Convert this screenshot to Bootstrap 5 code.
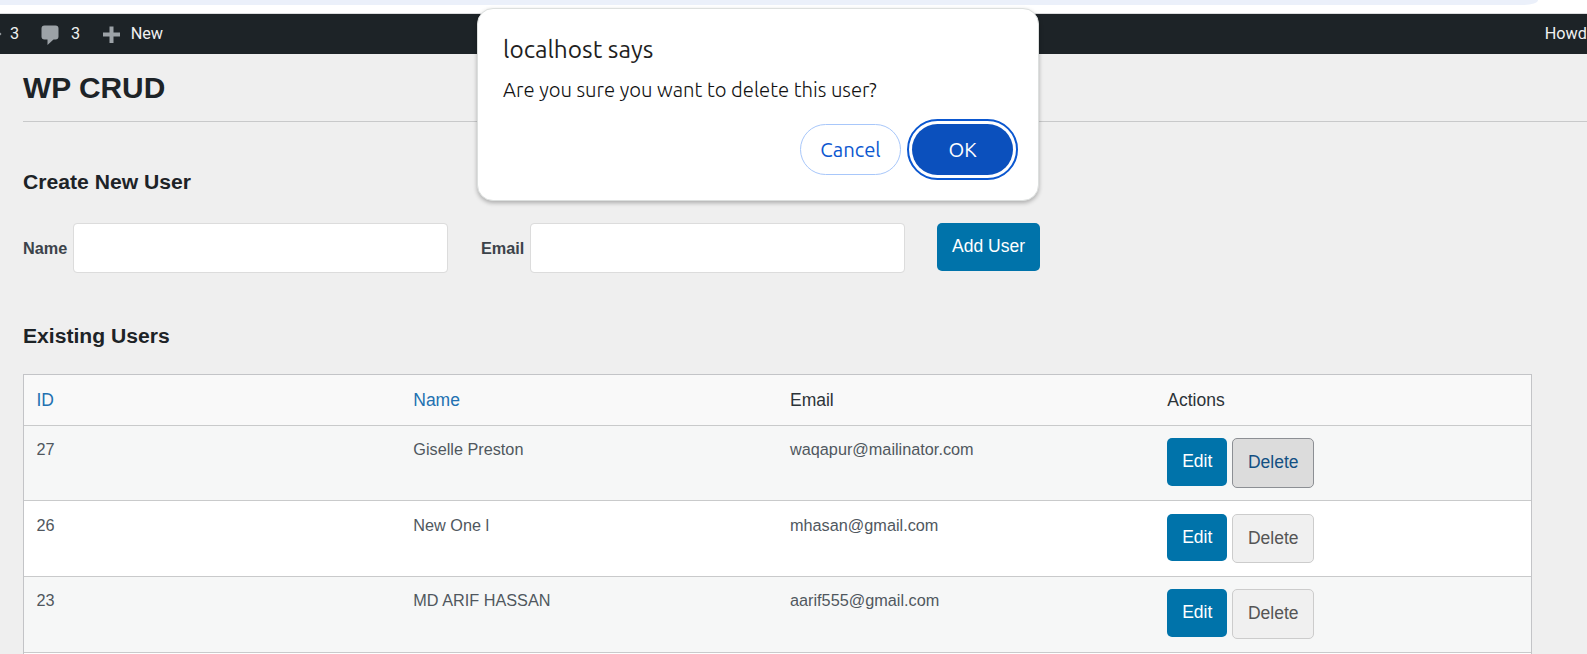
<!DOCTYPE html>
<html lang="en">
<head>
<meta charset="utf-8">
<title>WP CRUD</title>
<link href="https://cdn.jsdelivr.net/npm/bootstrap@5.3.0/dist/css/bootstrap.min.css" rel="stylesheet">
<style>
  body { background: #efefef; font-family: "Liberation Sans", Arial, sans-serif; font-size: 16.25px; color: #3c434a; height: 654px; overflow: hidden; }
  .browser-strip { height: 14px; background: #fff; border-bottom: 1px solid #dcdcde; }
  .omnibox { width: 1538px; height: 5px; background: #ebf0fa; border-radius: 0 0 14px 0 / 0 0 5px 0; }
  .admin-bar { height: 40px; background: #1d2327; color: #f0f0f1; font-family: Roboto, sans-serif; font-size: 16.25px; line-height: 40px; overflow: hidden; white-space: nowrap; }
  .admin-bar svg { display: block; fill: #9ca2a7; }
  .update-icon { width: 10px; overflow: hidden; }
  .update-count { width: 31px; }
  .comment-count { width: 43px; padding-left: 11px; }
  .wrap-page { padding-left: 23px; height: 600px; overflow: hidden; }
  h1 { font-size: 29.9px; line-height: 36px; font-weight: 700; color: #1d2327; padding: 16px 0 15px; border-bottom: 1px solid #c8c9ca; margin: 0; }
  h2 { font-size: 21.13px; line-height: 26px; font-weight: 700; color: #1d2327; margin: 0; }
  .create-title { margin-top: 47px; }
  .user-form { margin-top: 28px; height: 50px; }
  .user-form label { font-weight: 700; line-height: 50px; }
  .name-label { width: 50px; } .email-label { width: 49px; margin-left: 33px; }
  .user-form .form-control { width: 375px; height: 50px; border: 1px solid #dcdcdc; border-radius: 4px; }
  .btn-wp { background: #0073aa; color: #fff; font-size: 17.5px; line-height: 20px; padding: 13px 0 15px; border: 0; border-radius: 5px; height: 48px; }
  .btn-add { width: 103px; margin-left: 32px; }
  .list-title { margin-top: 50px; }
  .user-table { width: 1509px; margin: 25px 0 0; table-layout: fixed; border-collapse: separate; border-spacing: 0; border: 1px solid #c3c4c7; border-bottom: 0; }
  .user-table th, .user-table td { border-bottom: 1px solid #c9cacb; padding: 0 12.5px; vertical-align: top; }
  .user-table th:last-child, .user-table td:last-child { padding-left: 13px; }
  .user-table th { height: 51px; font-weight: 400; font-size: 17.5px; line-height: 50px; color: #2c3338; background: #f9f9f9; }
  .user-table th a { color: #2271b1; text-decoration: none; }
  .user-table td { height: 76px; padding-top: 13px; line-height: 22px; color: #50575e; background: #fff; }
  .user-table tr.row-first td { height: 75px; padding-top: 12px; }
  .user-table tr.odd td { background: #f6f7f7; }
  .user-table tr.odd.row-last td { padding-top: 12px; }
  .btn-edit { width: 60px; }
  .btn-del { width: 82px; height: 50px; margin-left: 5px; background: #f0f0f0; border: 1px solid #ccc; border-radius: 5px; color: #555; font-size: 17.5px; line-height: 20px; padding: 13px 0 15px; }
  .row-mid .btn-edit { height: 47px; }
  .row-mid .btn-del { height: 49px; padding-bottom: 14px; }
  .btn-del.pressed { background: #dcdcdc; border-color: #8c8f94; color: #135083; }
  .confirm-box { top: 8px; left: 477px; width: 562px; height: 193px; background: #fff; border: 1px solid #dcdfde; border-radius: 16px; box-shadow: 0 2px 4px rgba(0,0,0,.28); font-family: Ubuntu, "Noto Sans", sans-serif; color: #1f1f1f; padding: 24px 25px 0 25px; }
  .confirm-title { font-size: 24.4px; line-height: 32px; }
  .confirm-text { font-size: 20.28px; line-height: 28px; margin-top: 11px; font-weight: 300; color: #111; white-space: nowrap; }
  .confirm-actions { margin-top: 20px; gap: 11px; }
  .btn-pill { width: 101px; height: 51px; border-radius: 26px; font-size: 20.3px; padding: 0; line-height: 49px; font-weight: 400; }
  .btn-cancel { border: 1px solid #a8c7fa; color: #0b57d0; background: #fff; }
  .btn-ok { background: #0b50bd; color: #fff; border: 0; outline: 2px solid #0b57d0; outline-offset: 3px; }
</style>
</head>
<body>
<div class="browser-strip"><div class="omnibox"></div></div>
<nav class="admin-bar d-flex" aria-label="Admin bar">
  <div class="d-flex">
    <span class="update-icon"><svg width="10" height="40" viewBox="0 0 10 40"><path d="M0 18.500l1.500 1.500-1.500 1.500z"/></svg></span>
    <span class="update-count">3</span>
    <svg width="19" height="40" viewBox="0 0 19 40"><path d="M3.500 11.500h11a3 3 0 0 1 3 3v8a3 3 0 0 1-3 3H12.500L6.500 31v-5.500H3.500a3 3 0 0 1-3-3v-8a3 3 0 0 1 3-3z"/></svg>
    <span class="comment-count">3</span>
    <svg width="18" height="40" viewBox="0 0 18 40"><path d="M6.500 12.500h4v6h6.500v4h-6.500v6.500H6.500v-6.500h-6.500v-4h6.500z"/></svg>
    <span class="ps-2">&#8202;New</span>
  </div>
  <span class="ms-auto">Howd</span>
</nav>
<main class="wrap-page">
  <h1>WP CRUD</h1>
  <h2 class="create-title">Create New User</h2>
  <form class="user-form d-flex">
    <label class="name-label" for="name">Name</label><input id="name" class="form-control" type="text">
    <label class="email-label" for="email">Email</label><input id="email" class="form-control" type="email">
    <button type="button" class="btn btn-wp btn-add text-nowrap">Add User</button>
  </form>
  <h2 class="list-title">Existing Users</h2>
  <table class="user-table">
    <thead><tr><th><a href="#">ID</a></th><th><a href="#">Name</a></th><th>Email</th><th>Actions</th></tr></thead>
    <tbody>
      <tr class="odd row-first"><td>27</td><td>Giselle Preston</td><td>waqapur@mailinator.com</td><td><div class="d-flex"><button class="btn btn-wp btn-edit">Edit</button><button class="btn btn-del pressed">Delete</button></div></td></tr>
      <tr class="row-mid"><td>26</td><td>New One l</td><td>mhasan@gmail.com</td><td><div class="d-flex"><button class="btn btn-wp btn-edit">Edit</button><button class="btn btn-del">Delete</button></div></td></tr>
      <tr class="odd row-last"><td>23</td><td>MD ARIF HASSAN</td><td>aarif555@gmail.com</td><td><div class="d-flex"><button class="btn btn-wp btn-edit">Edit</button><button class="btn btn-del">Delete</button></div></td></tr>
      <tr><td></td><td></td><td></td><td></td></tr>
    </tbody>
  </table>
</main>
<div class="confirm-box position-absolute" role="dialog" aria-label="localhost says">
  <div class="confirm-title">localhost says</div>
  <div class="confirm-text">Are you sure you want to delete this user?</div>
  <div class="confirm-actions d-flex justify-content-end">
    <button class="btn btn-pill btn-cancel">Cancel</button>
    <button class="btn btn-pill btn-ok">OK</button>
  </div>
</div>
<script src="https://cdn.jsdelivr.net/npm/bootstrap@5.3.0/dist/js/bootstrap.bundle.min.js"></script>
</body>
</html>
